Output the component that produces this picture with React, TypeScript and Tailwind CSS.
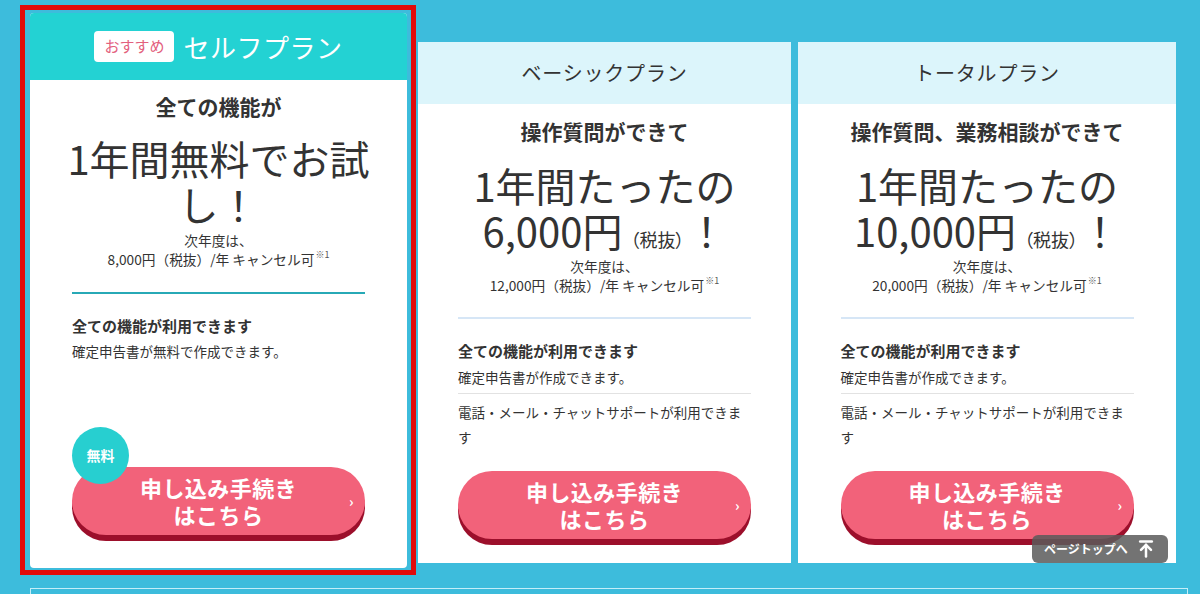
import { ArrowUpToLine } from 'lucide-react';

type Plan = {
  id: string;
  name: string;
  lead: string;
  price?: string;
  next: string;
  note: string;
  support: boolean;
};

const plans: Plan[] = [
  {
    id: 'basic',
    name: 'ベーシックプラン',
    lead: '操作質問ができて',
    price: '6,000円',
    next: '12,000円（税抜）/年 キャンセル可',
    note: '確定申告書が作成できます。',
    support: true,
  },
  {
    id: 'total',
    name: 'トータルプラン',
    lead: '操作質問、業務相談ができて',
    price: '10,000円',
    next: '20,000円（税抜）/年 キャンセル可',
    note: '確定申告書が作成できます。',
    support: true,
  },
];

const NextYear = ({ text }: { text: string }) => (
  <div className="text-center text-[13.7px] leading-[19px] text-[#333]">
    <p>次年度は、</p>
    <p>
      {text}
      <sup className="text-[9px] leading-none text-[#555] align-[3px] ml-[1px]">※1</sup>
    </p>
  </div>
);

const ApplyButton = () => (
  <button className="relative w-[293px] h-[68px] rounded-full bg-[#f2627a] shadow-[0_6px_0_#9c0f2b] text-white font-bold text-[22px] leading-[27px] tracking-[0.02em]">
    申し込み手続き
    <br />
    はこちら
    <span className="absolute right-[11px] top-1/2 -translate-y-1/2 text-[14px] leading-none font-bold">›</span>
  </button>
);

const SelfCard = () => (
  // red frame marks the selected plan
  <div className="mt-[5px] -ml-[10px] border-[5px] border-[#e10b0b] pt-[3px] pl-[5px] pr-[4px] pb-[2px]">
    <div className="w-[377px] h-[555px] bg-white rounded-[4px] flex flex-col">
      <div className="h-[67px] shrink-0 bg-[#23d2d3] rounded-t-[4px] flex items-center justify-center gap-[9px]">
        <span className="h-[31px] px-[10px] rounded-[4px] bg-white text-[#e3607d] text-[15px] flex items-center">おすすめ</span>
        <span className="text-white text-[26px] tracking-[0.02em]">セルフプラン</span>
      </div>
      <div className="w-[293px] mx-auto flex flex-col flex-1">
        <p className="mt-[11px] text-center text-[21px] leading-[30px] font-bold text-[#333]">全ての機能が</p>
        <p className="mt-[14px] text-center text-[40px] leading-[46px] text-[#333] -mx-[6px]">1年間無料でお試し！</p>
        <div className="mt-[4px]">
          <NextYear text="8,000円（税抜）/年 キャンセル可" />
        </div>
        <div className="mt-[23px] h-[2px] bg-[#27a9b6]" />
        <p className="mt-[21px] text-[15px] leading-[22px] font-bold text-[#333]">全ての機能が利用できます</p>
        <p className="mt-[2px] text-[13.5px] leading-[24px] text-[#333]">確定申告書が無料で作成できます。</p>
        <div className="relative mt-auto mb-[33px]">
          <span className="absolute -top-[40px] left-0 z-10 w-[57px] h-[57px] rounded-full bg-[#27cfd0] text-white text-[14px] font-bold flex items-center justify-center">無料</span>
          <ApplyButton />
        </div>
      </div>
    </div>
  </div>
);

const PlanCard = ({ plan, width }: { plan: Plan; width: string }) => (
  <div className={`mt-[42px] ${width} h-[521px] bg-white flex flex-col`}>
    <div className="h-[62px] shrink-0 bg-[#dcf5fb] flex items-center justify-center text-[20px] tracking-[0.04em] text-[#333]">
      {plan.name}
    </div>
    <div className="w-[293px] mx-auto flex flex-col flex-1">
      <p className="mt-[12px] text-center text-[21px] leading-[30px] font-bold text-[#333] whitespace-nowrap">{plan.lead}</p>
      <div className="mt-[17px] text-center text-[40px] leading-[45px] text-[#333]">
        <p>1年間たったの</p>
        <p>
          {plan.price}
          <span className="text-[18px] leading-none ml-[8px] mr-[2px] [font-feature-settings:'palt']">（税抜）</span>！
        </p>
      </div>
      <div className="mt-[4px]">
        <NextYear text={plan.next} />
      </div>
      <div className="mt-[22px] h-[2px] bg-[#d6e6f6]" />
      <p className="mt-[21px] text-[15px] leading-[22px] font-bold text-[#333]">全ての機能が利用できます</p>
      <p className="mt-[3px] text-[13.5px] leading-[24px] text-[#333]">{plan.note}</p>
      <div className="mt-[4px] h-px bg-[#e2e2e2]" />
      <p className="mt-[6px] text-[13.5px] leading-[25px] text-[#333]">電話・メール・チャットサポートが利用できます</p>
      <div className="mt-auto mb-[24px]">
        <ApplyButton />
      </div>
    </div>
  </div>
);

export default function App() {
  return (
    <div className="relative w-[1200px] h-[594px] overflow-hidden bg-[#3dbcdc] font-['Noto_Sans_CJK_JP','Noto_Sans',sans-serif]">
      <div className="flex items-start pl-[30px]">
        <SelfCard />
        <div className="ml-[2px]">
          <PlanCard plan={plans[0]} width="w-[373px]" />
        </div>
        <div className="ml-[7px]">
          <PlanCard plan={plans[1]} width="w-[378px]" />
        </div>
      </div>

      <div className="absolute left-[30px] top-[588px] w-[1158px] h-[40px] border border-[#c4eef8]" />

      <button className="absolute left-[1032px] top-[535px] w-[136px] h-[28px] rounded-[6px] bg-[#5a5a5a]/85 text-white text-[12px] font-bold flex items-center justify-center gap-[8px]">
        ページトップへ
        <ArrowUpToLine className="w-[20px] h-[20px]" strokeWidth={3} />
      </button>
    </div>
  );
}
